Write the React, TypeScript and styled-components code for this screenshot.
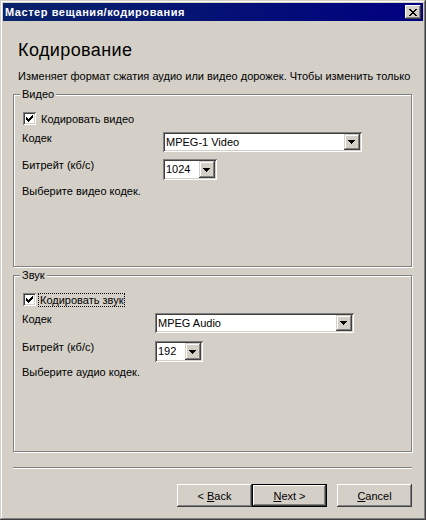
import React from "react";
import styled, { createGlobalStyle } from "styled-components";

const Global = createGlobalStyle`
  html, body { margin: 0; padding: 0; background: #d4d0c8; }
  body { width: 426px; height: 520px; overflow: hidden; }
  * { box-sizing: border-box; }
`;

const FONT = `"Liberation Sans", Arial, sans-serif`;

const Window = styled.div`
  width: 426px;
  height: 520px;
  padding: 3px;
  background: #d4d0c8;
  font-family: ${FONT};
  font-size: 11px;
  color: #000;
  box-shadow: inset -1px -1px 0 #404040, inset 1px 1px 0 #d4d0c8,
    inset -2px -2px 0 #808080, inset 2px 2px 0 #ffffff;
  display: flex;
  flex-direction: column;
`;

const TitleBar = styled.div`
  height: 18px;
  background: linear-gradient(to right, #0a246a, #000080);
  display: flex;
  align-items: center;
  padding: 0 2px 0 2px;
`;

const Title = styled.span`
  flex: 1;
  color: #fff;
  font-weight: bold;
  font-size: 11px;
  letter-spacing: 0.55px;
  line-height: 18px;
`;

const CloseButton = styled.div`
  width: 16px;
  height: 14px;
  background: #d4d0c8;
  box-shadow: inset -1px -1px 0 #404040, inset 1px 1px 0 #ffffff,
    inset -2px -2px 0 #808080;
  display: flex;
  align-items: center;
  justify-content: center;
  padding-right: 1px;
`;

const Body = styled.div`
  flex: 1;
  display: flex;
  flex-direction: column;
  padding: 0 11px 0 10px;
`;

const Heading = styled.h1`
  margin: 18px 0 0 5px;
  font-family: ${FONT};
  font-size: 18px;
  letter-spacing: 0.4px;
  line-height: 22px;
  font-weight: normal;
`;

const Description = styled.p`
  margin: 9px -6px 0 5px;
  line-height: 13px;
  white-space: nowrap;
`;

const GroupBox = styled.div<{ $top: number; $height: number }>`
  position: relative;
  margin-top: ${(p) => p.$top}px;
  height: ${(p) => p.$height}px;
  border: 1px solid #808080;
  box-shadow: inset 1px 1px 0 #fff, 1px 1px 0 #fff;
  padding: 17px 8px 0 8px;
  display: flex;
  flex-direction: column;
`;

const Legend = styled.span`
  position: absolute;
  top: -7px;
  left: 6px;
  padding: 0 2px;
  line-height: 13px;
  background: #d4d0c8;
`;

const CheckRow = styled.label`
  display: flex;
  align-items: center;
  height: 13px;
  margin-left: 1px;
`;

const CheckBox = styled.span`
  width: 13px;
  height: 13px;
  background: #fff;
  box-shadow: inset 1px 1px 0 #808080, inset -1px -1px 0 #ffffff,
    inset 2px 2px 0 #404040, inset -2px -2px 0 #d4d0c8;
  display: flex;
  align-items: center;
  justify-content: center;
  flex: none;
`;

const CheckText = styled.span<{ $focused?: boolean }>`
  margin-left: ${(p) => (p.$focused ? 3 : 4)}px;
  line-height: 12px;
  padding: 0 1px;
  outline: ${(p) => (p.$focused ? "1px dotted #000" : "none")};
`;

const FieldRow = styled.div<{ $top: number; $labelWidth: number }>`
  display: flex;
  align-items: flex-start;
  margin-top: ${(p) => p.$top}px;
  & > span:first-child {
    width: ${(p) => p.$labelWidth}px;
    flex: none;
  }
`;

const FieldLabel = styled.span`
  line-height: 13px;
`;

const Combo = styled.div<{ $width: number; $height: number }>`
  width: ${(p) => p.$width}px;
  height: ${(p) => p.$height}px;
  background: #fff;
  box-shadow: inset 1px 1px 0 #808080, inset -1px -1px 0 #ffffff,
    inset 2px 2px 0 #404040, inset -2px -2px 0 #d4d0c8;
  padding: 2px;
  display: flex;
  align-items: center;
`;

const ComboText = styled.span`
  flex: 1;
  padding-left: 1px;
  line-height: 13px;
`;

const DropButton = styled.span`
  width: 16px;
  height: 100%;
  background: #d4d0c8;
  box-shadow: inset -1px -1px 0 #404040, inset 1px 1px 0 #d4d0c8,
    inset -2px -2px 0 #808080, inset 2px 2px 0 #ffffff;
  display: flex;
  align-items: center;
  justify-content: center;
  padding-right: 1px;
`;

const Hint = styled.div<{ $top: number }>`
  margin-top: ${(p) => p.$top}px;
  line-height: 13px;
`;

const Separator = styled.div`
  margin-top: 15px;
  height: 2px;
  border-top: 1px solid #808080;
  border-bottom: 1px solid #ffffff;
`;

const ButtonRow = styled.div`
  margin-top: 15px;
  display: flex;
  justify-content: flex-end;
`;

const Button = styled.button<{ $default?: boolean; $gap?: number }>`
  width: 75px;
  height: 23px;
  margin-left: ${(p) => p.$gap ?? 0}px;
  font-family: ${FONT};
  font-size: 11px;
  color: #000;
  background: #d4d0c8;
  border: ${(p) => (p.$default ? "1px solid #000" : "none")};
  padding: 0;
  box-shadow: inset -1px -1px 0 #404040, inset 1px 1px 0 #ffffff,
    inset -2px -2px 0 #808080;
  cursor: default;
  u { text-decoration: underline; }
`;

const Check = () => (
  <svg width="7" height="7" viewBox="0 0 7 7" shapeRendering="crispEdges">
    {[2, 3, 4, 3, 2, 1, 0].map((y, x) => (
      <rect key={x} x={x} y={y} width="1" height="3" fill="#000" />
    ))}
  </svg>
);

const Arrow = () => (
  <svg width="7" height="4" viewBox="0 0 7 4" shapeRendering="crispEdges">
    {[0, 1, 2, 3].map((i) => (
      <rect key={i} x={i} y={i} width={7 - 2 * i} height="1" fill="#000" />
    ))}
  </svg>
);

const CloseX = () => (
  <svg width="8" height="7" viewBox="0 0 8 7" shapeRendering="crispEdges">
    {[0, 1, 2, 3, 4, 5, 6].map((i) => (
      <React.Fragment key={i}>
        <rect x={i} y={i} width="2" height="1" fill="#000" />
        <rect x={6 - i} y={i} width="2" height="1" fill="#000" />
      </React.Fragment>
    ))}
  </svg>
);

const ComboBox = ({ value, width, height }: { value: string; width: number; height: number }) => (
  <Combo $width={width} $height={height}>
    <ComboText>{value}</ComboText>
    <DropButton>
      <Arrow />
    </DropButton>
  </Combo>
);

export default function App() {
  return (
    <>
      <Global />
      <Window>
        <TitleBar>
          <Title>Мастер вещания/кодирования</Title>
          <CloseButton>
            <CloseX />
          </CloseButton>
        </TitleBar>
        <Body>
          <Heading>Кодирование</Heading>
          <Description>
            Изменяет формат сжатия аудио или видео дорожек. Чтобы изменить только
          </Description>

          <GroupBox $top={11} $height={173}>
            <Legend>Видео</Legend>
            <CheckRow>
              <CheckBox>
                <Check />
              </CheckBox>
              <CheckText>Кодировать видео</CheckText>
            </CheckRow>
            <FieldRow $top={7} $labelWidth={141}>
              <FieldLabel>Кодек</FieldLabel>
              <ComboBox value="MPEG-1 Video" width={199} height={20} />
            </FieldRow>
            <FieldRow $top={7} $labelWidth={141}>
              <FieldLabel>Битрейт (кб/с)</FieldLabel>
              <ComboBox value="1024" width={54} height={21} />
            </FieldRow>
            <Hint $top={5}>Выберите видео кодек.</Hint>
          </GroupBox>

          <GroupBox $top={8} $height={177}>
            <Legend>Звук</Legend>
            <CheckRow>
              <CheckBox>
                <Check />
              </CheckBox>
              <CheckText $focused>Кодировать звук</CheckText>
            </CheckRow>
            <FieldRow $top={7} $labelWidth={133}>
              <FieldLabel>Кодек</FieldLabel>
              <ComboBox value="MPEG Audio" width={199} height={20} />
            </FieldRow>
            <FieldRow $top={8} $labelWidth={133}>
              <FieldLabel>Битрейт (кб/с)</FieldLabel>
              <ComboBox value="192" width={48} height={21} />
            </FieldRow>
            <Hint $top={4}>Выберите аудио кодек.</Hint>
          </GroupBox>

          <Separator />
          <ButtonRow>
            <Button>
              &lt; <u>B</u>ack
            </Button>
            <Button $default>
              <u>N</u>ext &gt;
            </Button>
            <Button $gap={10}>
              <u>C</u>ancel
            </Button>
          </ButtonRow>
        </Body>
      </Window>
    </>
  );
}
